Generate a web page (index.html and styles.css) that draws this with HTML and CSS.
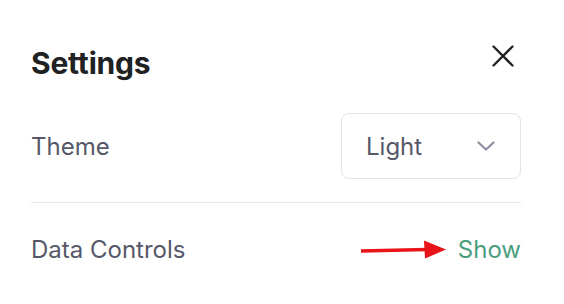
FILE: index.html
```html
<!DOCTYPE html>
<html>
<head>
<meta charset="utf-8">
<link rel="stylesheet" href="styles.css">
</head>
<body>
<div class="modal">
  <div class="header">
    <h1 class="title">Settings</h1>
    <button class="close" aria-label="Close">
      <svg width="22" height="22" viewBox="0 0 22 22"><path d="M1.5 1.5 L20.5 20.5 M20.5 1.5 L1.5 20.5" stroke="#202123" stroke-width="2.3" stroke-linecap="round" fill="none"/></svg>
    </button>
  </div>
  <div class="row theme-row">
    <span class="label">Theme</span>
    <div class="select">
      <span class="select-value">Light</span>
      <svg class="chev" width="18" height="10" viewBox="0 0 18 10"><path d="M1.5 1.5 L9 8.5 L16.5 1.5" stroke="#8e8ea0" stroke-width="2.2" stroke-linecap="round" stroke-linejoin="round" fill="none"/></svg>
    </div>
  </div>
  <div class="row data-row">
    <span class="label">Data Controls</span>
    <div class="show-wrap">
      <svg class="arrow" width="86" height="22" viewBox="0 0 86 22"><path d="M0 12 L66 10.6" stroke="#e8141a" stroke-width="3.5" fill="none"/><path d="M63 1.5 L85 10.5 L64 19.5 Z" fill="#e8141a"/></svg>
      <span class="show">Show</span>
    </div>
  </div>
</div>
</body>
</html>
```

FILE: styles.css
```css
html, body {
  margin: 0;
  padding: 0;
  background: #ffffff;
}
body {
  width: 564px;
  height: 304px;
  overflow: hidden;
  font-family: "Inter", "Liberation Sans", sans-serif;
}
.modal {
  padding: 40px 43px 0 31px;
}
.header {
  height: 46px;
  display: flex;
  align-items: center;
  justify-content: space-between;
}
.title {
  margin: 0;
  font-size: 30px;
  font-weight: 700;
  color: #202123;
  letter-spacing: -0.2px;
}
.close {
  border: 0;
  background: none;
  padding: 0;
  align-self: flex-start;
  margin: 5px 7px 0 0;
  width: 22px;
  height: 22px;
  display: flex;
}
.row {
  display: flex;
  align-items: center;
  justify-content: space-between;
}
.label {
  font-size: 24px;
  color: #565869;
}
.theme-row {
  padding: 27px 0 23px;
  border-bottom: 1px solid #e5e5e5;
}
.select {
  width: 180px;
  height: 66px;
  border: 1px solid #e3e3e6;
  border-radius: 8px;
  display: flex;
  align-items: center;
  justify-content: space-between;
  padding: 0 25px 0 24px;
  box-sizing: border-box;
}
.select-value {
  font-size: 24px;
  color: #565869;
}
.data-row {
  padding-top: 32px;
}
.show-wrap {
  display: flex;
  align-items: center;
  gap: 11px;
}
.arrow {
  display: block;
}
.show {
  font-size: 24px;
  color: #4a9e7d;
}
```
